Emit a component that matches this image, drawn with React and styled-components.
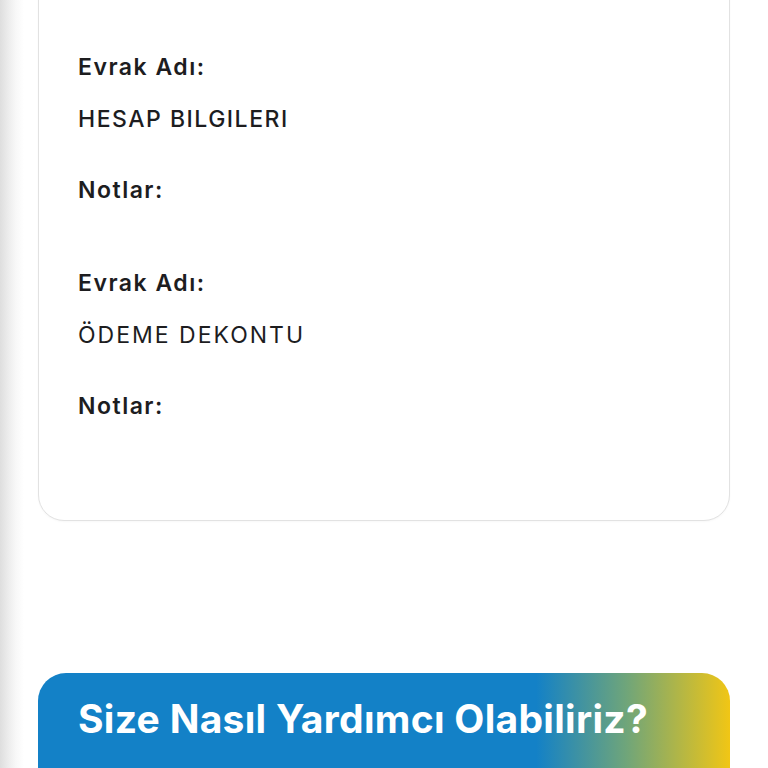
import React from "react";
import styled, { createGlobalStyle } from "styled-components";

const Global = createGlobalStyle`
  html, body { margin: 0; padding: 0; }
  body {
    background: linear-gradient(to right, #dedede 0px, #ececec 8px, #f8f8f8 16px, #ffffff 24px);
    font-family: "Inter", "Noto Sans", sans-serif;
    color: #1d1d1f;
    overflow: hidden;
  }
`;

const Page = styled.div`
  padding: 0 38px 0 38px;
  height: 768px;
  overflow: hidden;
`;

const Card = styled.section`
  margin-top: -40px;
  border: 1px solid #e2e2e2;
  border-radius: 26px;
  background: #fff;
  padding: 91px 39px 99px;
  display: flex;
  flex-direction: column;
  gap: 63px;
  box-shadow: 0 1px 2px rgba(0,0,0,0.03);
`;

const Doc = styled.div`
  display: flex;
  flex-direction: column;
`;

const Line = styled.div`
  font-size: 23px;
  line-height: 30px;
  letter-spacing: ${p => p.$ls ?? 1.5}px;
  font-weight: ${p => p.$w || 400};
  margin-top: ${p => p.$mt || 0}px;
  white-space: nowrap;
`;

const Banner = styled.div`
  margin-top: 152px;
  border-radius: 28px;
  padding: 22px 40px 60px;
  background: linear-gradient(to right, #1381c7 0%, #1381c7 72%, #6fa57a 85%, #f1c615 100%);
`;

const Heading = styled.h2`
  margin: 0;
  color: #fff;
  font-size: 39px;
  line-height: 48px;
  font-weight: 700;
  letter-spacing: 0.3px;
  white-space: nowrap;
`;

const docs = [
  { name: "HESAP BILGILERI", weight: 500, ls: 1.5 },
  { name: "ÖDEME DEKONTU", weight: 400, ls: 2.0 },
];

export default function App() {
  return (
    <>
      <Global />
      <Page>
        <Card>
          {docs.map(d => (
            <Doc key={d.name}>
              <Line $w={600}>Evrak Adı:</Line>
              <Line $w={d.weight} $ls={d.ls} $mt={22}>{d.name}</Line>
              <Line $w={600} $mt={41}>Notlar:</Line>
            </Doc>
          ))}
        </Card>
        <Banner>
          <Heading>Size Nasıl Yardımcı Olabiliriz?</Heading>
        </Banner>
      </Page>
    </>
  );
}
